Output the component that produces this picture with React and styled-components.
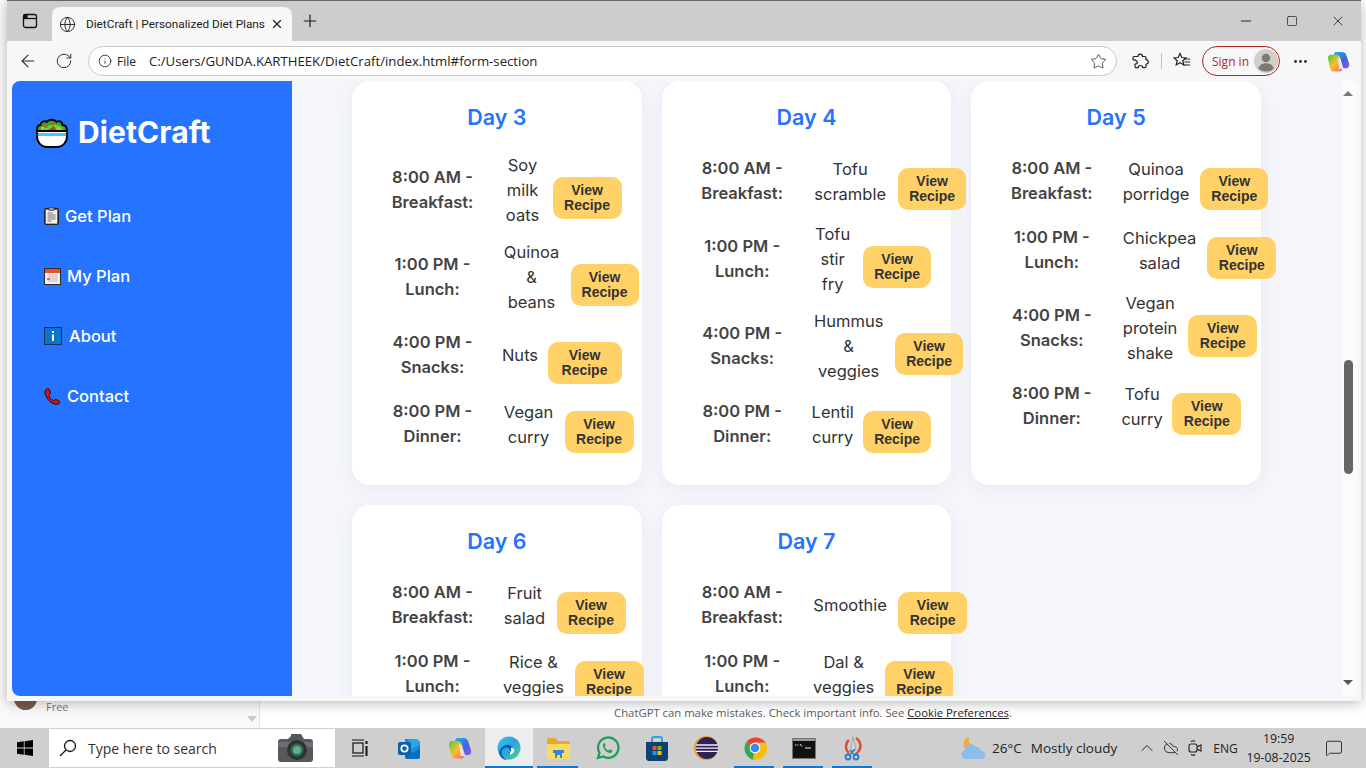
import React from "react";
import styled, { createGlobalStyle } from "styled-components";
import {
  ArrowLeft,
  RotateCw,
  Star,
  Info,
  Globe,
  Plus,
  X,
  Minus,
  Square,
  Ellipsis,
  ChevronUp,
  CloudOff,
  MessageSquare,
} from "lucide-react";

const GlobalStyle = createGlobalStyle`
  html, body { margin: 0; padding: 0; overflow: hidden; background: #fff; }
  * { box-sizing: border-box; }
`;

const Desktop = styled.div`
  width: 1366px;
  height: 768px;
  display: flex;
  flex-direction: column;
  position: relative;
  overflow: hidden;
  font-family: "Open Sans", "Noto Sans", sans-serif;
`;

const Backdrop = styled.div`
  flex: 1;
  display: flex;
  align-items: flex-end;
  background: #fff;
`;

const ChatSide = styled.div`
  width: 260px;
  height: 100%;
  background: #f9f9f9;
  border-right: 1px solid #e6e6e6;
  display: flex;
  align-items: flex-end;
  justify-content: space-between;
  padding: 0 2px 6px 14px;
`;

const ChatUser = styled.div`
  display: flex;
  gap: 9px;
  align-items: flex-end;
  margin-bottom: 8px;
  font-size: 11px;
  line-height: 15px;
  color: #777;
`;

const ChatAvatar = styled.div`
  width: 23px;
  height: 23px;
  border-radius: 50%;
  background: #7c5a4e;
  margin-bottom: 4px;
`;

const ChatArrow = styled.div`
  width: 0;
  height: 0;
  border-left: 5px solid transparent;
  border-right: 5px solid transparent;
  border-top: 6px solid #ccc;
`;

const ChatNote = styled.div`
  flex: 1;
  height: 28px;
  display: flex;
  align-items: center;
  justify-content: center;
  padding-bottom: 3px;
  font-size: 11.3px;
  color: #5d5d5d;
  a { color: #222; text-decoration: underline; }
`;

const Browser = styled.div`
  position: absolute;
  left: 7px;
  top: 0;
  width: 1354px;
  height: 701px;
  display: flex;
  flex-direction: column;
  background: #f7f7f7;
  border-top: 1px solid #666;
  box-shadow: 0 2px 12px rgba(0, 0, 0, 0.28);
`;

const TabStrip = styled.div`
  height: 40px;
  background: #cdcdcd;
  display: flex;
  align-items: flex-end;
  flex-shrink: 0;
`;

const StripIcon = styled.div`
  width: ${(p) => p.$w || 45}px;
  height: 40px;
  display: flex;
  align-items: center;
  justify-content: center;
  color: #1d1d1d;
`;

const Tab = styled.div`
  width: 240px;
  height: 34px;
  background: #f7f7f7;
  border-radius: 8px 8px 0 0;
  display: flex;
  align-items: center;
  padding: 0 8px 0 7px;
  font-family: Roboto, "Open Sans", sans-serif;
  font-size: 11.8px;
  color: #222;
  svg { flex-shrink: 0; }
`;

const TabTitle = styled.span`
  flex: 1;
  margin-left: 10px;
  white-space: nowrap;
`;

const StripFill = styled.div`
  flex: 1;
`;

const Toolbar = styled.div`
  height: 40px;
  display: flex;
  align-items: center;
  flex-shrink: 0;
  padding-left: 3px;
`;

const ToolIcon = styled.div`
  width: ${(p) => p.$w || 36}px;
  height: 30px;
  display: flex;
  align-items: center;
  justify-content: center;
  color: #2b2b2b;
  flex-shrink: 0;
`;

const Address = styled.div`
  width: 1029px;
  height: 30px;
  margin: 0 2px 0 6px;
  border: 1px solid #c9c9c9;
  border-radius: 15px;
  background: #fff;
  display: flex;
  align-items: center;
  padding-left: 9px;
  font-size: 13.2px;
  color: #222;
  flex-shrink: 0;
`;

const AddressFile = styled.span`
  margin-left: 5px;
  width: 32px;
  font-size: 12px;
`;

const AddressUrl = styled.span`
  flex: 1;
  white-space: nowrap;
`;

const ToolDivider = styled.div`
  width: 1px;
  height: 16px;
  background: #c4c4c4;
`;

const SignIn = styled.div`
  width: 78px;
  height: 30px;
  border: 1px solid #b3261e;
  border-radius: 15px;
  display: flex;
  align-items: center;
  justify-content: space-between;
  padding: 0 1px 0 9px;
  font-size: 12px;
  color: #b3261e;
  flex-shrink: 0;
`;

const Content = styled.div`
  flex: 1;
  min-height: 0;
  margin: 0 4px 5px 5px;
  border-radius: 8px;
  overflow: hidden;
  display: flex;
  background: #f4f6fb;
`;

const Sidebar = styled.aside`
  width: 280px;
  flex-shrink: 0;
  background: #2673ff;
  padding: 34px 23px 0;
  color: #fff;
  font-family: Inter, "Liberation Sans", sans-serif;
`;

const Logo = styled.div`
  display: flex;
  align-items: center;
  gap: 9px;
  height: 34px;
  font-size: 30px;
  font-weight: 700;
  letter-spacing: 0.1px;
`;

const Nav = styled.nav`
  display: flex;
  flex-direction: column;
  gap: 36px;
  margin-top: 55px;
  padding-left: 9px;
`;

const NavItem = styled.div`
  height: 24px;
  display: flex;
  align-items: center;
  gap: ${(p) => p.$gap || 6}px;
  font-size: 16.5px;
  font-weight: 500;
`;

const Main = styled.main`
  flex: 1;
  min-width: 0;
  padding-left: 60px;
  overflow: hidden;
  font-family: Inter, "Liberation Sans", sans-serif;
`;

const CardGrid = styled.div`
  width: 909px;
  display: grid;
  grid-template-columns: repeat(3, minmax(0, 1fr));
  gap: 20px;
  align-items: stretch;
`;

const Card = styled.section`
  background: #fff;
  border-radius: 18px;
  padding: 20px 0 32px;
  box-shadow: 0 4px 18px rgba(30, 50, 90, 0.06);
`;

const DayTitle = styled.h3`
  margin: 0 0 20px;
  height: 32px;
  line-height: 32px;
  text-align: center;
  font-size: 21.5px;
  font-weight: 600;
  color: #2673ff;
`;

const MealList = styled.div`
  display: flex;
  flex-direction: column;
  gap: 12px;
`;

const MealRow = styled.div`
  display: flex;
  align-items: center;
  padding-left: 31.5px;
`;

const MealLabel = styled.div`
  width: 98px;
  flex-shrink: 0;
  padding-bottom: 2px;
  text-align: center;
  font-size: 16.5px;
  font-weight: 600;
  line-height: 25px;
  color: #444;
  white-space: nowrap;
`;

const MealFood = styled.div`
  width: ${(p) => p.$w}px;
  flex-shrink: 0;
  margin-left: 21px;
  text-align: center;
  font-size: 16.5px;
  line-height: 25px;
  color: #333;
  white-space: nowrap;
  display: flex;
  flex-direction: column;
  align-items: center;
`;

const RecipeButton = styled.button`
  width: ${(p) => p.$w}px;
  height: 42px;
  flex-shrink: 0;
  margin: 15px 0 0 10px;
  padding: 0;
  border: none;
  border-radius: 10px;
  background: #ffd166;
  font-family: "Liberation Sans", Arial, sans-serif;
  font-size: 14px;
  font-weight: 700;
  line-height: 15px;
  color: #333;
`;

const ScrollTrack = styled.div`
  width: 15px;
  flex-shrink: 0;
  background: #fbfbfb;
  display: flex;
  flex-direction: column;
  align-items: center;
  padding: 0 3px 0 0;
`;

const ScrollArrow = styled.div`
  width: 0;
  height: 0;
  border-left: 5px solid transparent;
  border-right: 5px solid transparent;
  ${(p) => (p.$down ? "border-top: 5px solid #555;" : "border-bottom: 5px solid #777;")}
  margin-top: ${(p) => (p.$down ? 206 : 10)}px;
`;

const ScrollThumb = styled.div`
  width: 9px;
  height: 114px;
  margin-top: 264px;
  border-radius: 5px;
  background: #666;
`;

const Taskbar = styled.footer`
  height: 40px;
  flex-shrink: 0;
  background: #cfcfcf;
  display: flex;
  align-items: center;
  position: relative;
  z-index: 2;
`;

const StartButton = styled.div`
  width: 49px;
  height: 40px;
  display: flex;
  align-items: center;
  justify-content: center;
`;

const SearchBox = styled.div`
  width: 286px;
  height: 38px;
  background: #fff;
  display: flex;
  align-items: center;
  padding: 0 21px 0 10px;
  font-size: 14px;
  color: #333;
`;

const SearchText = styled.span`
  flex: 1;
  margin-left: 11px;
  white-space: nowrap;
`;

const TaskIcon = styled.div`
  width: ${(p) => p.$w || 49}px;
  height: 40px;
  flex-shrink: 0;
  display: flex;
  align-items: center;
  justify-content: center;
  position: relative;
  background: ${(p) => (p.$active ? "#ededed" : "transparent")};
  &::after {
    content: "";
    display: ${(p) => (p.$open ? "block" : "none")};
    position: absolute;
    left: ${(p) => (p.$active ? 0 : 4)}px;
    right: ${(p) => (p.$active ? 0 : 5)}px;
    bottom: 0;
    height: 2px;
    background: #0a78d4;
  }
`;

const Tray = styled.div`
  flex: 1;
  display: flex;
  align-items: center;
  padding-left: 83px;
  font-size: 13.5px;
  color: #222;
`;

const WeatherText = styled.span`
  margin-left: ${(p) => p.$ml}px;
  white-space: nowrap;
`;

const TrayIcon = styled.div`
  width: ${(p) => p.$w || 24}px;
  margin-left: ${(p) => p.$ml || 0}px;
  display: flex;
  justify-content: center;
  color: #222;
  flex-shrink: 0;
`;

const TrayLang = styled.span`
  margin-left: 6px;
  font-size: 12px;
`;

const Clock = styled.div`
  width: 70px;
  margin-left: 6px;
  text-align: center;
  font-size: 12.3px;
  line-height: 19px;
`;

const days = [
  {
    day: 3,
    meals: [
      ["8:00 AM -", "Breakfast:", ["Soy", "milk", "oats"], 40, 69],
      ["1:00 PM -", "Lunch:", ["Quinoa", "&", "beans"], 58, 68],
      ["4:00 PM -", "Snacks:", ["Nuts"], 35, 74],
      ["8:00 PM -", "Dinner:", ["Vegan", "curry"], 52, 69],
    ],
  },
  {
    day: 4,
    meals: [
      ["8:00 AM -", "Breakfast:", ["Tofu", "scramble"], 76, 68],
      ["1:00 PM -", "Lunch:", ["Tofu", "stir", "fry"], 41, 68],
      ["4:00 PM -", "Snacks:", ["Hummus", "&", "veggies"], 73, 68],
      ["8:00 PM -", "Dinner:", ["Lentil", "curry"], 41, 68],
    ],
  },
  {
    day: 5,
    meals: [
      ["8:00 AM -", "Breakfast:", ["Quinoa", "porridge"], 68.5, 68],
      ["1:00 PM -", "Lunch:", ["Chickpea", "salad"], 75.5, 69],
      ["4:00 PM -", "Snacks:", ["Vegan", "protein", "shake"], 56.5, 69],
      ["8:00 PM -", "Dinner:", ["Tofu", "curry"], 40.5, 69],
    ],
  },
  {
    day: 6,
    meals: [
      ["8:00 AM -", "Breakfast:", ["Fruit", "salad"], 44, 69],
      ["1:00 PM -", "Lunch:", ["Rice &", "veggies"], 62, 69],
    ],
  },
  {
    day: 7,
    meals: [
      ["8:00 AM -", "Breakfast:", ["Smoothie"], 76, 69],
      ["1:00 PM -", "Lunch:", ["Dal &", "veggies"], 63, 68],
    ],
  },
];

const SaladIcon = () => (
  <svg width="34" height="34" viewBox="0 0 34 34">
    <path
      d="M3 17c-2.500-3-.5-7 2.500-7 0-3 4-5 6-3 2-3 8-3 10 0 3-2 6 0 6 3 4 0 5 4 4 7z"
      fill="#36a821"
      stroke="#000"
      strokeWidth="1.800"
    />
    <path d="M6 15c2-4 6-5 8-4 3-2 8-2 10 0 3 0 4 2 4 4z" fill="#6fce3b" />
    <circle cx="11" cy="11.500" r="1.600" fill="#e0452b" />
    <circle cx="18" cy="9" r="1.400" fill="#d8413a" />
    <circle cx="24" cy="14" r="1.600" fill="#f4b51e" />
    <circle cx="7" cy="13" r="1.300" fill="#f4b51e" />
    <path d="M13 15l6-4 2 4z" fill="#c8392b" />
    <path d="M2 16h30v5c0 7-5 11-10 11H12C7 32 2 28 2 21z" fill="#fff" stroke="#000" strokeWidth="1.800" />
    <rect x="3" y="18" width="28" height="3" fill="#39d0f0" />
  </svg>
);

const ClipboardIcon = () => (
  <svg width="15" height="18" viewBox="0 0 15 18">
    <rect x="0.5" y="1.5" width="14" height="16" rx="1" fill="#8a5a34" stroke="#222" />
    <rect x="2" y="3" width="11" height="13.5" fill="#efefec" />
    <rect x="5" y="0.5" width="5" height="3" fill="#9c9c9c" stroke="#333" strokeWidth="0.6" />
    <path d="M3.5 6h5M3.5 8h8M3.5 10h8M3.5 12h8M3.5 14h4" stroke="#777" strokeWidth="1.1" />
  </svg>
);

const CalendarIcon = () => (
  <svg width="17" height="17" viewBox="0 0 17 17">
    <rect x="0.5" y="0.5" width="16" height="16" fill="#f3f1ee" stroke="#2a2a2a" />
    <rect x="1" y="1" width="15" height="4" fill="#ea4f2c" />
    <path d="M4 7h10M4 9h10M4 11h10M4 13h10M6 6v8M9 6v8M12 6v8" stroke="#bdbdbd" strokeWidth="0.7" />
    <rect x="3" y="10" width="3" height="2" fill="#ec6b4f" />
  </svg>
);

const InfoIcon = () => (
  <svg width="18" height="18" viewBox="0 0 18 18">
    <rect x="0.5" y="0.5" width="17" height="17" fill="#0b74ce" stroke="#12305c" />
    <rect x="8" y="4" width="2" height="2" fill="#fff" />
    <rect x="8" y="7.5" width="2" height="6.5" fill="#fff" />
  </svg>
);

const PhoneIcon = () => (
  <svg width="17" height="17" viewBox="0 0 17 17">
    <path
      d="M3 .8C1.2 1.6.6 3.4 1.2 6c.9 3.7 4.4 8.2 8.4 9.8 2.2.9 4.8.6 6-.7.6-.7.3-1.5-.5-2l-2.7-1.5c-.8-.4-1.4 0-2 .6-.4.4-1 .5-1.5.1C6.900 11.200 5.600 9.400 5 7.700c-.2-.6.1-1 .6-1.300.7-.4 1-.9.8-1.700L5.300 1.400C5 .6 3.900.4 3 .8z"
      fill="#d5140f"
      stroke="#1a0d0d"
      strokeWidth="1"
    />
  </svg>
);

const CopilotIcon = ({ size, id }) => (
  <svg width={size} height={size} viewBox="0 0 24 24">
    <defs>
      <linearGradient id={`${id}a`} x1="0" y1="0" x2="1" y2="1">
        <stop offset="0" stopColor="#1fb6e8" />
        <stop offset="0.6" stopColor="#3d63e6" />
        <stop offset="1" stopColor="#b04fd6" />
      </linearGradient>
      <linearGradient id={`${id}b`} x1="0" y1="0" x2="1" y2="1">
        <stop offset="0" stopColor="#4fc24a" />
        <stop offset="0.5" stopColor="#f6c12d" />
        <stop offset="1" stopColor="#ef5f8a" />
      </linearGradient>
    </defs>
    <path d="M9 2h7c2 0 3 1 4 3l3 9c1 3-1 5-3 5h-3l-3-10c-.7-2-1.600-3-3-3H7C7 4 8 2 9 2z" fill={`url(#${id}a)`} />
    <path d="M4 5h6c1.500 0 2 1 2.500 2.500L16 19c.5 2-1 3.500-3 3.500H7c-2 0-3-1-3.500-3L1 9C.5 7 2 5 4 5z" fill={`url(#${id}b)`} />
    <path d="M11 9h2l3 9c.5 1.500 1.500 2 2.500 2H11c1 0 2-.5 1.500-2z" fill="#f7f7f7" opacity="0.75" />
  </svg>
);

const WindowsLogo = () => (
  <svg width="16" height="16" viewBox="0 0 16 16" fill="#000">
    <path d="M0 2.200 6.800 1.300v6.300H0zM7.600 1.200 16 0v7.600H7.600zM0 8.400h6.800v6.300L0 13.800zM7.600 8.400H16V16l-8.400-1.200z" />
  </svg>
);

const SearchGlass = () => (
  <svg width="18" height="18" viewBox="0 0 18 18" fill="none" stroke="#111" strokeWidth="1.3">
    <circle cx="11" cy="7" r="5.500" />
    <path d="M7 11l-6 6" />
  </svg>
);

const CameraIcon = () => (
  <svg width="37" height="32" viewBox="0 0 37 32">
    <path d="M1 10c0-2 1-3 3-3h7l3-3V2h10l3 5h6c2 0 3 1 3 3v17c0 2-1 3-3 3H4c-2 0-3-1-3-3z" fill="#55585c" />
    <path d="M1 10h35v5H1z" fill="#6b6e72" />
    <circle cx="20" cy="18" r="10" fill="#2f3235" />
    <circle cx="20" cy="18" r="6.500" fill="#2c6e55" />
    <circle cx="20" cy="18" r="4" fill="#5fb18d" />
  </svg>
);

const TaskViewIcon = () => (
  <svg width="18" height="18" viewBox="0 0 18 18" fill="none" stroke="#111" strokeWidth="1.200">
    <rect x="2" y="4" width="10" height="10" />
    <path d="M1 1h12M1 17h12" />
    <path d="M15.500 2v3M15.500 7v10" strokeWidth="2" />
  </svg>
);

const OutlookIcon = () => (
  <svg width="24" height="24" viewBox="0 0 24 24">
    <path d="M8 3h12l3 3v14H8z" fill="#1490df" />
    <path d="M12 3h8l3 5-8 5-5-4z" fill="#28a8ea" />
    <path d="M8 12l8 5 7-5v9c0 1-1 2-2 2H10c-1 0-2-1-2-2z" fill="#0a6cbd" />
    <rect x="1" y="6" width="13" height="13" rx="2" fill="#0f5ea8" />
    <circle cx="7.500" cy="12.500" r="3.200" fill="none" stroke="#fff" strokeWidth="1.700" />
  </svg>
);

const EdgeIcon = () => (
  <svg width="24" height="24" viewBox="0 0 24 24">
    <defs>
      <linearGradient id="edgeG" x1="0" y1="0" x2="1" y2="1">
        <stop offset="0" stopColor="#35c1f1" />
        <stop offset="0.5" stopColor="#2ba4e0" />
        <stop offset="1" stopColor="#55d776" />
      </linearGradient>
    </defs>
    <circle cx="12" cy="12" r="11.500" fill="url(#edgeG)" />
    <path d="M2 17c1-6 6-9 10-8 3 .7 5 3 5 5 0 2-2 3-4 3-1 0-2-.5-2-1 3 1 3-3 0-4-4-1-8 3-6 7 1 2 3 4 5 5-4 0-7-3-8-7z" fill="#0b5fb0" />
    <path d="M14 13c3 0 2 4-1 4" fill="none" stroke="#fff" strokeWidth="3" />
  </svg>
);

const FolderIcon = () => (
  <svg width="24" height="22" viewBox="0 0 24 22">
    <path d="M1 3c0-1 .6-2 2-2h6l3 3h10c1 0 2 1 2 2v3H1z" fill="#e9a825" />
    <path d="M1 7h23v13c0 1-1 2-2 2H3c-1 0-2-1-2-2z" fill="#ffd765" />
    <path d="M7 13h11v3h-2v5h-2v-3h-3v3H9v-5H7z" fill="#2c8bd6" />
  </svg>
);

const WhatsAppIcon = () => (
  <svg width="25" height="25" viewBox="0 0 25 25" fill="none">
    <path d="M3 22l1.500-5.200A10.200 10.200 0 1 1 8.300 20.500z" stroke="#1f9d54" strokeWidth="2.200" />
    <path
      d="M9 7.500c-1 .8-1.400 2-.8 3.700 1 2.600 3 4.700 5.700 5.600 1.700.5 3-.1 3.500-1.300.2-.5 0-.9-.4-1.100l-1.800-.9c-.4-.2-.7 0-1 .3l-.6.8c-2-.8-3.200-2-4-3.900l.7-.7c.3-.3.300-.6.200-1l-.8-1.800c-.2-.5-1.100-1-1.700-.7z"
      fill="#1f9d54"
    />
  </svg>
);

const StoreIcon = () => (
  <svg width="24" height="25" viewBox="0 0 24 25">
    <path d="M7 6V3c0-1 1-2 2-2h6c1 0 2 1 2 2v3" fill="none" stroke="#29a5e6" strokeWidth="2" />
    <path d="M1 6h22v16c0 1.500-1 3-3 3H4c-2 0-3-1.500-3-3z" fill="#0f3f73" />
    <rect x="7.500" y="10" width="4" height="4" fill="#f25022" />
    <rect x="12.500" y="10" width="4" height="4" fill="#7fba00" />
    <rect x="7.500" y="15" width="4" height="4" fill="#00a4ef" />
    <rect x="12.500" y="15" width="4" height="4" fill="#ffb900" />
  </svg>
);

const EclipseIcon = () => (
  <svg width="24" height="24" viewBox="0 0 24 24">
    <circle cx="12" cy="12" r="12" fill="#f29a22" />
    <circle cx="13" cy="12" r="11" fill="#2c2255" />
    <path d="M2 9h22M2 12.200h22M2 15.400h22" stroke="#f1eef9" strokeWidth="1.300" />
  </svg>
);

const ChromeIcon = () => (
  <svg width="24" height="24" viewBox="0 0 24 24">
    <path d="M12 12 3.300 6A12 12 0 0 1 22.800 6.800H12z" fill="#ea4335" />
    <path d="M12 12l-8.700-6A12 12 0 0 0 10 23.800z" fill="#34a853" />
    <path d="M12 12l-2 11.800A12 12 0 0 0 22.800 6.800H12z" fill="#fbbc05" />
    <circle cx="12" cy="12" r="5.400" fill="#fff" />
    <circle cx="12" cy="12" r="4.300" fill="#4285f4" />
  </svg>
);

const CmdIcon = () => (
  <svg width="24" height="21" viewBox="0 0 24 21">
    <rect x="0.500" y="0.500" width="23" height="20" fill="#111" stroke="#777" />
    <rect x="1" y="1" width="22" height="2" fill="#9a9a9a" />
    <path d="M3 7h1.500M5.500 7h1M8 6l2 2.500M13 10h6" stroke="#eee" strokeWidth="1" fill="none" />
  </svg>
);

const SnipIcon = () => (
  <svg width="20" height="25" viewBox="0 0 20 25" fill="none">
    <path d="M6 4c-4 3-4 10 0 13M13 2c5 3 6 10 2 14l-3 3" stroke="#d8502c" strokeWidth="2.400" />
    <path d="M10 1l3 12-3 3-2-4z" fill="#d8d8d8" stroke="#888" strokeWidth="0.600" />
    <circle cx="5" cy="21" r="2.500" stroke="#1f7ed0" strokeWidth="1.800" />
    <circle cx="13" cy="21" r="2.500" stroke="#1f7ed0" strokeWidth="1.800" />
    <path d="M6.500 19L12 13M11.500 19L7 14" stroke="#1f7ed0" strokeWidth="1.300" />
  </svg>
);

const WeatherIcon = () => (
  <svg width="26" height="24" viewBox="0 0 26 24">
    <path d="M10 1a7 7 0 1 0 7 9 6 6 0 0 1-7-9z" fill="#f2ae3a" />
    <path d="M6 23a4.500 4.500 0 0 1-1-8.900A6 6 0 0 1 16 11a5 5 0 0 1 5 4 4 4 0 0 1 0 8z" fill="#8fbdea" />
  </svg>
);

const MeetIcon = () => (
  <svg width="14" height="18" viewBox="0 0 14 18" fill="none" stroke="#222" strokeWidth="1.100">
    <rect x="1" y="5" width="8" height="8" rx="2" />
    <path d="M9 8l4-2v6l-4-2M3 2.500c1.500-1 3-1 4 0M3 15.500c1.500 1 3 1 4 0" />
  </svg>
);

const Avatar = () => (
  <svg width="24" height="24" viewBox="0 0 28 28">
    <circle cx="14" cy="14" r="14" fill="#d2cfca" />
    <circle cx="14" cy="10.500" r="5" fill="#7d7a76" />
    <path d="M5 23c1-5 5-6.500 9-6.500s8 1.500 9 6.500a14 14 0 0 1-18 0z" fill="#7d7a76" />
  </svg>
);

const ExtensionIcon = () => (
  <svg width="17" height="17" viewBox="0 0 17 17" fill="none" stroke="#222" strokeWidth="1.200" strokeLinejoin="round">
    <path d="M6 3.500c0-1.300 1-2.300 2.300-2.300s2.200 1 2.200 2.300h2.300c.7 0 1.200.5 1.200 1.200v2c1.300 0 2.300 1 2.300 2.300s-1 2.200-2.300 2.200v2.300c0 .7-.5 1.200-1.200 1.200h-2c0-1.300-1-2.200-2.300-2.200s-2.300.9-2.300 2.200h-2c-.7 0-1.200-.5-1.200-1.200v-2.300c1.300 0 2.300-.9 2.300-2.200S2.300 6.700 1 6.700v-2c0-.7.5-1.200 1.200-1.200z" />
  </svg>
);

const FavoritesIcon = () => (
  <svg width="18" height="18" viewBox="0 0 18 18" fill="none" stroke="#222" strokeWidth="1.200">
    <path d="M7 1.500l1.800 4 4.200.4-3.200 2.800 1 4.200L7 10.700l-3.800 2.200 1-4.200L1 5.900l4.200-.4z" />
    <path d="M11 7h6M11.500 10h5.500M10 13h7" />
  </svg>
);

const TabsIcon = () => (
  <svg width="16" height="16" viewBox="0 0 16 16" fill="none" stroke="#111" strokeWidth="1.300">
    <rect x="1.500" y="1.500" width="13" height="13" rx="2" />
    <path d="M1.500 5.500h13" />
    <path d="M2 2h3v3H2z" fill="#111" />
  </svg>
);

const App = () => {
  return (
    <>
      <GlobalStyle />
      <Desktop>
        <Backdrop>
          <ChatSide>
            <ChatUser>
              <ChatAvatar />
              <span>Free</span>
            </ChatUser>
            <ChatArrow />
          </ChatSide>
          <ChatNote>
            <span>
              ChatGPT can make mistakes. Check important info. See <a>Cookie Preferences</a>.
            </span>
          </ChatNote>
        </Backdrop>

        <Browser>
          <TabStrip>
            <StripIcon>
              <TabsIcon />
            </StripIcon>
            <Tab>
              <Globe size={17} strokeWidth={1.3} />
              <TabTitle>DietCraft | Personalized Diet Plans</TabTitle>
              <X size={14} strokeWidth={2} />
            </Tab>
            <StripIcon $w={36}>
              <Plus size={20} strokeWidth={1.4} />
            </StripIcon>
            <StripFill />
            <StripIcon $w={46}>
              <Minus size={16} strokeWidth={1.4} />
            </StripIcon>
            <StripIcon $w={46}>
              <Square size={12} strokeWidth={1.4} />
            </StripIcon>
            <StripIcon $w={46}>
              <X size={16} strokeWidth={1.2} />
            </StripIcon>
          </TabStrip>

          <Toolbar>
            <ToolIcon>
              <ArrowLeft size={20} strokeWidth={1.3} />
            </ToolIcon>
            <ToolIcon>
              <RotateCw size={18} strokeWidth={1.3} />
            </ToolIcon>
            <Address>
              <Info size={14} strokeWidth={1.4} />
              <AddressFile>File</AddressFile>
              <AddressUrl>C:/Users/GUNDA.KARTHEEK/DietCraft/index.html#form-section</AddressUrl>
              <ToolIcon $w={36}>
                <Star size={17} strokeWidth={1.1} />
              </ToolIcon>
            </Address>
            <ToolIcon $w={42}>
              <ExtensionIcon />
            </ToolIcon>
            <ToolDivider />
            <ToolIcon $w={40}>
              <FavoritesIcon />
            </ToolIcon>
            <SignIn>
              Sign in
              <Avatar />
            </SignIn>
            <ToolIcon $w={40}>
              <Ellipsis size={17} />
            </ToolIcon>
            <ToolIcon $w={36}>
              <CopilotIcon size={23} id="cpA" />
            </ToolIcon>
          </Toolbar>

          <Content>
            <Sidebar>
              <Logo>
                <SaladIcon />
                DietCraft
              </Logo>
              <Nav>
                <NavItem>
                  <ClipboardIcon />
                  Get Plan
                </NavItem>
                <NavItem>
                  <CalendarIcon />
                  My Plan
                </NavItem>
                <NavItem $gap={7}>
                  <InfoIcon />
                  About
                </NavItem>
                <NavItem>
                  <PhoneIcon />
                  Contact
                </NavItem>
              </Nav>
            </Sidebar>

            <Main>
              <CardGrid>
                {days.map((d) => (
                  <Card key={d.day}>
                    <DayTitle>Day {d.day}</DayTitle>
                    <MealList>
                      {d.meals.map(([time, meal, food, foodWidth, btnWidth]) => (
                        <MealRow key={meal}>
                          <MealLabel>
                            {time}
                            <br />
                            {meal}
                          </MealLabel>
                          <MealFood $w={foodWidth}>
                            {food.map((line, i) => (
                              <span key={i}>{line}</span>
                            ))}
                          </MealFood>
                          <RecipeButton $w={btnWidth}>
                            View
                            <br />
                            Recipe
                          </RecipeButton>
                        </MealRow>
                      ))}
                    </MealList>
                  </Card>
                ))}
              </CardGrid>
            </Main>

            <ScrollTrack>
              <ScrollArrow />
              <ScrollThumb />
              <ScrollArrow $down />
            </ScrollTrack>
          </Content>
        </Browser>

        <Taskbar>
          <StartButton>
            <WindowsLogo />
          </StartButton>
          <SearchBox>
            <SearchGlass />
            <SearchText>Type here to search</SearchText>
            <CameraIcon />
          </SearchBox>
          <TaskIcon>
            <TaskViewIcon />
          </TaskIcon>
          <TaskIcon $w={50}>
            <OutlookIcon />
          </TaskIcon>
          <TaskIcon $w={51}>
            <CopilotIcon size={24} id="cpB" />
          </TaskIcon>
          <TaskIcon $w={48} $active $open>
            <EdgeIcon />
          </TaskIcon>
          <TaskIcon $w={50} $open>
            <FolderIcon />
          </TaskIcon>
          <TaskIcon>
            <WhatsAppIcon />
          </TaskIcon>
          <TaskIcon>
            <StoreIcon />
          </TaskIcon>
          <TaskIcon>
            <EclipseIcon />
          </TaskIcon>
          <TaskIcon $open>
            <ChromeIcon />
          </TaskIcon>
          <TaskIcon $open>
            <CmdIcon />
          </TaskIcon>
          <TaskIcon $open>
            <SnipIcon />
          </TaskIcon>
          <Tray>
            <WeatherIcon />
            <WeatherText $ml={6}>26°C</WeatherText>
            <WeatherText $ml={9}>Mostly cloudy</WeatherText>
            <TrayIcon $ml={18}>
              <ChevronUp size={20} strokeWidth={1.2} />
            </TrayIcon>
            <TrayIcon>
              <CloudOff size={16} strokeWidth={1.3} />
            </TrayIcon>
            <TrayIcon>
              <MeetIcon />
            </TrayIcon>
            <TrayLang>ENG</TrayLang>
            <Clock>
              19:59
              <br />
              19-08-2025
            </Clock>
            <TrayIcon $w={40}>
              <MessageSquare size={18} strokeWidth={1.2} />
            </TrayIcon>
          </Tray>
        </Taskbar>
      </Desktop>
    </>
  );
};

export default App;
